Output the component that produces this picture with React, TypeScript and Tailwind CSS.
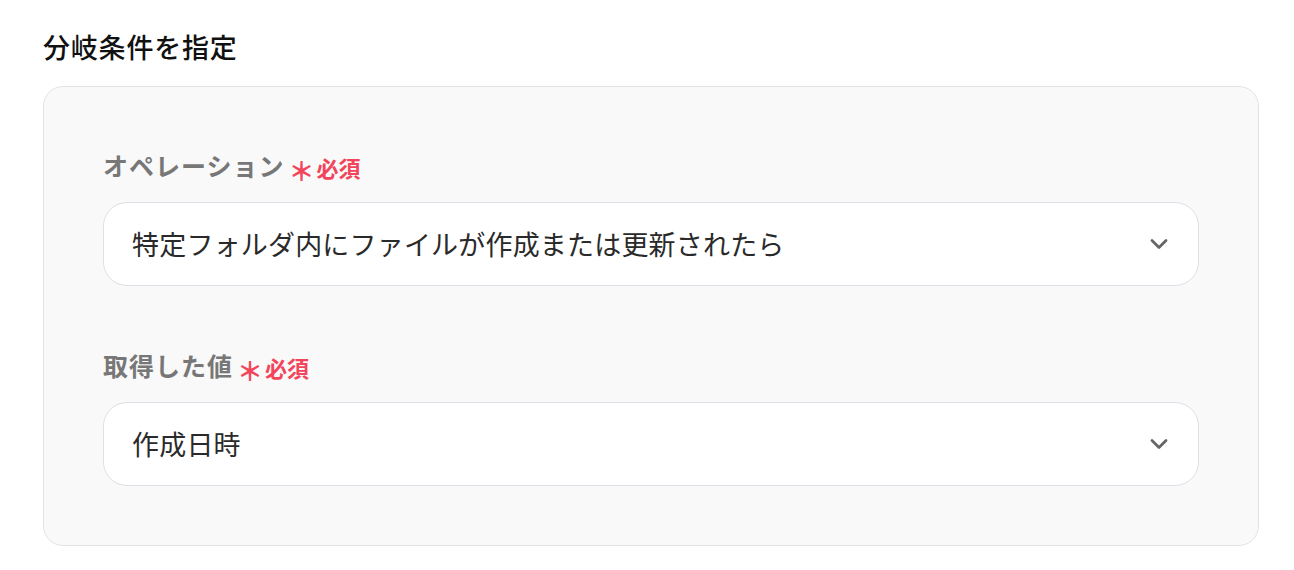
import { ChevronDown } from 'lucide-react'

const fields = [
  { label: 'オペレーション', value: '特定フォルダ内にファイルが作成または更新されたら' },
  { label: '取得した値', value: '作成日時' },
]

function Field({ label, value, first }: { label: string; value: string; first?: boolean }) {
  return (
    <div className={first ? '' : 'mt-[64px]'}>
      <div className="flex items-center h-[32px]">
        <span className="text-[25px] font-bold text-[#777777] tracking-[0.04em]">{label}</span>
        <span className="ml-[4px] text-[26px] font-bold text-[#f2455c] leading-none mt-[8px]">＊</span>
        <span className="ml-[2px] text-[22px] font-bold text-[#f2455c] mt-[2px]">必須</span>
      </div>
      <div className="mt-[20px] h-[84px] bg-white border border-[#dde0e6] rounded-[24px] flex items-center pl-[28px] pr-[25px]">
        <span className="flex-1 text-[27px] text-[#2a2a2a] tracking-[0.007em]">{value}</span>
        <ChevronDown className="w-[28px] h-[28px] text-[#666666]" strokeWidth={2.4} />
      </div>
    </div>
  )
}

export default function App() {
  return (
    <div
      className="w-[1294px] h-[570px] bg-white pl-[43px] pt-[29px]"
      style={{ fontFamily: '"Noto Sans CJK JP", "Noto Sans", sans-serif' }}
    >
      <h2 className="text-[27px] leading-[36px] font-medium text-[#111111] tracking-[0.03em]">分岐条件を指定</h2>
      <div className="mt-[21px] w-[1216px] bg-[#f9f9f9] border border-[#e3e3e3] rounded-[20px] pt-[63px] pb-[59px] px-[59px]">
        {fields.map((f, i) => (
          <Field key={f.label} label={f.label} value={f.value} first={i === 0} />
        ))}
      </div>
    </div>
  )
}
